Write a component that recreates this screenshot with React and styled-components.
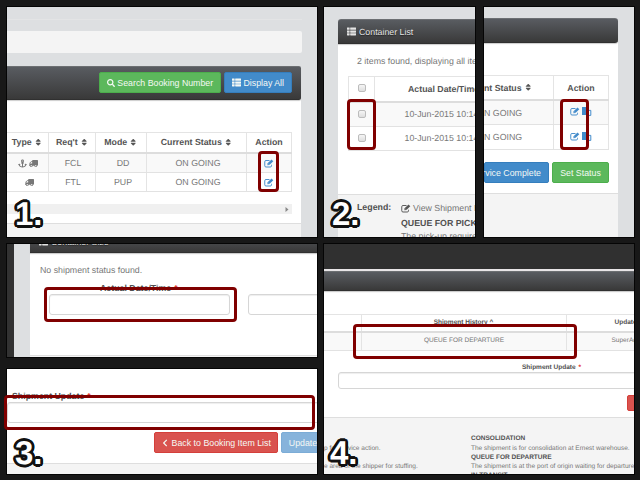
import React from "react";
import styled, { createGlobalStyle, css } from "styled-components";
import { FaSearch, FaThList, FaSort, FaAnchor, FaTruck, FaChevronLeft } from "react-icons/fa";

const Global = createGlobalStyle`
  * { box-sizing: border-box; }
  body { margin: 0; background: #181818; }
  svg { display: block; flex: none; }
`;

const Board = styled.main`
  width: 640px;
  height: 480px;
  padding: 7px;
  display: grid;
  grid-template-columns: 310px 310px;
  grid-template-rows: 230px 230px;
  gap: 7px;
  overflow: hidden;
  background: #181818;
  font: 8.8px/12px "Liberation Sans", Arial, sans-serif;
  text-rendering: geometricPrecision;
  color: #747474;
`;

const Step = styled.section`
  position: relative;
  min-width: 0;
  display: flex;
  flex-direction: ${(p) => (p.$row ? "row" : "column")};
  gap: ${(p) => p.$gap || 0}px;
`;

const Shot = styled.div`
  flex: none;
  width: ${(p) => p.$w || 310}px;
  height: ${(p) => p.$h || 230}px;
  padding: ${(p) => p.$pad || "0"};
  overflow: hidden;
  background: ${(p) => p.$bg || "#dddfe1"};
  box-shadow: 0 0 0 1px #050505;
  display: flex;
  flex-direction: column;
`;

const Breadcrumb = styled.div`
  flex: none;
  width: 294.5px;
  height: 34px;
  margin-bottom: 13px;
  padding-top: 11px;
  border-top: 1px solid #e3e4e5;
  &::after {
    content: "";
    display: block;
    height: 22px;
    background: #f4f4f4;
    border-radius: 0 2px 2px 0;
  }
`;

const Card = styled.div`
  flex: 1 0 auto;
  width: ${(p) => p.$w}px;
  display: flex;
  flex-direction: column;
  background: #fff;
  border-radius: 3px;
`;

const Header = styled.header`
  flex: none;
  height: ${(p) => p.$h}px;
  padding: 0 9px;
  display: flex;
  align-items: center;
  justify-content: ${(p) => p.$justify || "flex-start"};
  gap: 3px;
  color: #e4e4e4;
  background: ${(p) => (p.$flat ? "linear-gradient(#454648, #393939)" : "linear-gradient(#595c61, #393939)")};
  border-top: ${(p) => (p.$flat ? "0" : "1px solid #6c6f72")};
  border-bottom: 1px solid #303030;
  border-radius: ${(p) => p.$radius || "0"};
  box-shadow: 0 1px 1px #ccc;
`;

const Title = styled.div`
  display: flex;
  align-items: center;
  gap: 3px;
  margin-top: ${(p) => p.$lift || 0}px;
  text-shadow: 0 1px 1px #222;
`;

const tones = {
  green: css`background: #5cb85c; border-color: #4cae4c;`,
  blue: css`background: #428bca; border-color: #357ebd;`,
  red: css`background: #d9534f; border-color: #d43f3a;`,
  faded: css`background: #86b3db; border-color: #7cacd6;`,
};

const Button = styled.button`
  flex: none;
  width: ${(p) => p.$w}px;
  height: ${(p) => p.$h || 21}px;
  padding: 0 ${(p) => (p.$end ? "7px" : "0")} 0 0;
  border: 1px solid;
  border-radius: 2px;
  display: flex;
  align-items: center;
  justify-content: ${(p) => (p.$end ? "flex-end" : "center")};
  gap: 2.5px;
  white-space: nowrap;
  font: inherit;
  color: #f5f9f5;
  ${(p) => tones[p.$tone]}
`;

const ButtonRow = styled.div`
  flex: none;
  display: flex;
  gap: 3px;
  margin: ${(p) => p.$m || "0"};
`;

const Grid = styled.div`
  flex: none;
  width: ${(p) => p.$w || "auto"};
  margin: ${(p) => p.$m || "0"};
  border: solid #e4e4e4;
  border-width: 1px 0 0 ${(p) => (p.$left ? "1px" : "0")};
`;

const Row = styled.div`
  display: grid;
  grid-template-columns: ${(p) => p.$cols};
  height: ${(p) => p.$h}px;
  font-weight: ${(p) => (p.$head ? "bold" : "normal")};
  color: ${(p) => (p.$head ? "#555" : "#777")};
  background: ${(p) => (p.$odd ? "#f9f9f9" : "#fff")};
  border-bottom: ${(p) => (p.$head ? "2px solid #ddd" : "1px solid #e2e2e2")};
`;

const Cell = styled.div`
  min-width: 0;
  padding: ${(p) => p.$pad || "0"};
  display: flex;
  align-items: center;
  justify-content: ${(p) => (p.$start ? "flex-start" : "center")};
  gap: 2px;
  white-space: nowrap;
  border-right: ${(p) => (p.$open ? "0" : "1px solid #e4e4e4")};
`;

const Text = styled.div`
  flex: none;
  height: 12px;
  margin: ${(p) => p.$m || "0"};
  white-space: nowrap;
  font-weight: ${(p) => (p.$bold ? "bold" : "normal")};
  color: ${(p) => (p.$bold ? "#505050" : "#777")};
`;

const Star = styled.span`
  color: #e3302c;
  margin-left: 3px;
`;

const ScrollTrack = styled.div`
  flex: none;
  width: 285px;
  height: 10px;
  margin-top: 12px;
  padding-right: 3px;
  display: flex;
  align-items: center;
  justify-content: flex-end;
  background: #f0f0f0;
`;

const Footer = styled.footer`
  flex: 1;
  margin-top: ${(p) => p.$mt}px;
  padding: ${(p) => p.$pad || "0"};
  display: flex;
  background: #f4f4f4;
  border-top: 1px solid #dedede;
`;

const Stack = styled.div`
  flex: none;
  width: ${(p) => p.$w || "auto"};
  margin: ${(p) => p.$m || "0"};
`;

const Legend = styled.div`
  display: flex;
  align-items: center;
  gap: 2px;
  height: 12px;
  white-space: nowrap;
`;

const Field = styled.div`
  flex: none;
  width: ${(p) => p.$w}px;
  height: ${(p) => p.$h}px;
  margin: ${(p) => p.$m || "0"};
  background: #fff;
  border: 1px solid #d6d6d6;
  border-radius: 3px;
  box-shadow: inset 0 1px 1px #eee;
`;

const Fields = styled.div`
  display: flex;
  gap: 18px;
  margin-left: 19px;
`;

const Split = styled.div`
  flex: 1;
  display: flex;
`;

const Strip = styled.div`
  flex: none;
  width: ${(p) => p.$w || 310}px;
  height: ${(p) => (p.$h ? `${p.$h}px` : "auto")};
  background: ${(p) => p.$bg || "#323232"};
`;

const Check = styled.span`
  width: 8px;
  height: 8px;
  border: 1px solid #bcbcbc;
  border-radius: 2px;
  background: linear-gradient(#f5f5f5, #dedede);
`;

const Small = styled.div`
  font-size: 6.53px;
  line-height: 9.25px;
  white-space: nowrap;
  color: #777;
  b { color: #505050; }
`;

const Mark = styled.div`
  position: absolute;
  left: ${(p) => p.$x}px;
  top: ${(p) => p.$y}px;
  width: ${(p) => p.$w}px;
  height: ${(p) => p.$h}px;
  border: 3px solid #800000;
  border-radius: 4px;
`;

/* Sixteen offset shadows give the digits a round, even outline. */
const outline = Array.from({ length: 16 }, (_, i) => {
  const a = (i * Math.PI) / 8;
  return `${(Math.cos(a) * 2.7).toFixed(2)}px ${(Math.sin(a) * 2.7).toFixed(2)}px 0 #111`;
}).join(", ");

const StepNumber = styled.div`
  position: absolute;
  left: ${(p) => p.$x || 8}px;
  bottom: ${(p) => p.$b || 5}px;
  font: bold 33px/36px "Liberation Sans", Arial, sans-serif;
  color: #fff;
  text-shadow: ${outline};
`;

const Flip = styled.span`
  transform: scaleX(-1);
`;

const Edit = ({ color = "#428bca" }) => (
  <svg width="10" height="9" viewBox="0 0 20 18" fill="none" stroke={color}>
    <path d="M11 3H4a2.5 2.5 0 0 0-2.5 2.5v8A2.5 2.5 0 0 0 4 16h8.5a2.5 2.5 0 0 0 2.5-2.5V11.5" strokeWidth="1.9" />
    <path d="M6.8 12.6l.4-4L15 .8l3.6 3.6-7.8 7.8z" fill={color} stroke="none" />
    <path d="M8.3 9.2l1.9 1.9" stroke="#fff" strokeWidth="1.1" />
  </svg>
);

const Files = () => (
  <svg width="10" height="9" viewBox="0 0 10 9">
    <path d="M0 0h5v3L4 4v4H0z" fill="#428bca" />
    <path d="M4.9 5l1.7-1.6h2.2v5H4.9z" fill="#fff" stroke="#428bca" strokeWidth="1" />
  </svg>
);

const Sort = () => <FaSort size={8.5} />;

const Truck = () => (
  <Flip>
    <FaTruck size={9} />
  </Flip>
);

const Arrow = () => (
  <svg width="4" height="5" viewBox="0 0 4 5">
    <path d="M.5 0L3.5 2.5.5 5z" fill="#888" />
  </svg>
);

const bookingCols = "42px 47px 51px 100px 45px";

function BookingStep() {
  return (
    <Step>
      <Shot $pad="12px 0 0">
        <Breadcrumb />
        <Card $w={294}>
          <Header $h={34} $justify="flex-end" $radius="0 2px 2px 0">
            <ButtonRow $m="0 0 1px">
              <Button $tone="green" $w={122}><FaSearch size={8} />Search Booking Number</Button>
              <Button $tone="blue" $w={68}><FaThList size={9} />Display All</Button>
            </ButtonRow>
          </Header>
          <Grid $w="285px" $m="32px 0 0">
            <Row $head $h={21} $cols={bookingCols}>
              <Cell $pad="0 1px 1px 0">Type<Sort /></Cell>
              <Cell $pad="0 0 1px">Req't<Sort /></Cell>
              <Cell $pad="0 0 1px">Mode<Sort /></Cell>
              <Cell $pad="0 0 1px">Current Status<Sort /></Cell>
              <Cell $pad="0 0 1px">Action</Cell>
            </Row>
            <Row $odd $h={19} $cols={bookingCols}>
              <Cell><FaAnchor size={9} /><Truck /></Cell>
              <Cell $pad="0 0 1px 2px">FCL</Cell><Cell $pad="0 0 1px 4px">DD</Cell>
              <Cell $pad="0 0 1px 3px">ON GOING</Cell><Cell><Edit /></Cell>
            </Row>
            <Row $h={19} $cols={bookingCols}>
              <Cell $pad="0 0 0 3px"><Truck /></Cell>
              <Cell $pad="0 0 1px 2px">FTL</Cell><Cell $pad="0 0 1px 4px">PUP</Cell>
              <Cell $pad="0 0 1px 3px">ON GOING</Cell><Cell><Edit /></Cell>
            </Row>
          </Grid>
          <ScrollTrack><Arrow /></ScrollTrack>
          <Footer $mt={9} />
        </Card>
      </Shot>
      <Mark $x={251} $y={144} $w={21} $h={41} />
      <StepNumber>1.</StepNumber>
    </Step>
  );
}

function ContainerStep() {
  return (
    <Step $row $gap={9}>
      <Shot $w={151} $pad="12px 0 0 14px">
        <Card $w={137}>
          <Header $h={25} $radius="3px 0 0 0"><Title><FaThList size={9} />Container List</Title></Header>
          <Text $m="11px 0 9px 19px">2 items found, displaying all items.</Text>
          <Grid $left $m="0 0 0 10px">
            <Row $head $h={26} $cols="26px 1fr">
              <Cell $pad="0 0 2px"><Check /></Cell><Cell $start $open $pad="0 0 0 33px">Actual Date/Time</Cell>
            </Row>
            <Row $odd $h={24} $cols="26px 1fr">
              <Cell $pad="0 0 2px"><Check /></Cell><Cell $start $open $pad="0 0 1px 29.5px">10-Jun-2015 10:14</Cell>
            </Row>
            <Row $h={24} $cols="26px 1fr">
              <Cell $pad="0 0 2px"><Check /></Cell><Cell $start $open $pad="0 0 1px 29.5px">10-Jun-2015 10:14</Cell>
            </Row>
          </Grid>
          <Footer $mt={43} $pad="7px 0 0 19px">
            <Stack $w="44px"><Text $bold $m="-1px 0 0">Legend:</Text></Stack>
            <Stack>
              <Legend><Edit color="#555" />View Shipment History</Legend>
              <Text $bold $m="3px 0 1px">QUEUE FOR PICKUP</Text>
              <Text>The pick-up requires</Text>
            </Stack>
          </Footer>
        </Card>
      </Shot>
      <Shot $w={150} $pad="11px 0 0">
        <Card $w={134}>
          <Header $h={25} $radius="0 3px 3px 0" />
          <Grid $w="125px" $m="32px 0 0">
            <Row $head $h={25} $cols="70px 55px">
              <Cell $start>nt Status<Sort /></Cell><Cell>Action</Cell>
            </Row>
            <Row $odd $h={24} $cols="70px 55px">
              <Cell $start>N GOING</Cell><Cell $pad="0 0 2px"><Edit /><Files /></Cell>
            </Row>
            <Row $h={25} $cols="70px 55px">
              <Cell $start $pad="0 0 1px">N GOING</Cell><Cell $pad="0 0 2px"><Edit /><Files /></Cell>
            </Row>
          </Grid>
          <ButtonRow $m="12px 0 0">
            <Button $tone="blue" $w={65} $end>Service Complete</Button>
            <Button $tone="green" $w={57}>Set Status</Button>
          </ButtonRow>
          <Footer $mt={10} />
        </Card>
      </Shot>
      <Mark $x={23} $y={92} $w={29} $h={51} />
      <Mark $x={236} $y={92} $w={29} $h={51} />
      <StepNumber>2.</StepNumber>
    </Step>
  );
}

function UpdateStep() {
  return (
    <Step $gap={12}>
      <Shot $h={113}>
        <Split>
          <Strip $w={7} />
          <Strip $w={16} $bg="#dddfe1" />
          <Card $w={287}>
            <Header $h={9} $flat><Title $lift={-13}><FaThList size={9} />Container Size</Title></Header>
            <Text $m="11px 0 6px 10px">No shipment status found.</Text>
            <Text $bold $m="0 0 0 70px">Actual Date/Time<Star>*</Star></Text>
            <Fields>
              <Field $w={181} $h={21} />
              <Field $w={100} $h={21} />
            </Fields>
            <Footer $mt={40} />
          </Card>
        </Split>
      </Shot>
      <Shot $h={105} $bg="#fff">
        <Text $bold $m="21px 0 0 5px">Shipment Update<Star>*</Star></Text>
        <Field $w={320} $h={21} />
        <ButtonRow $m="9px 0 0 147px">
          <Button $tone="red" $w={124}><FaChevronLeft size={8} />Back to Booking Item List</Button>
          <Button $tone="faded" $w={44}>Update</Button>
        </ButtonRow>
        <Footer $mt={10} />
      </Shot>
      <Mark $x={37} $y={43} $w={193} $h={35} />
      <Mark $x={-3} $y={151} $w={311} $h={35} />
      <StepNumber $b={3}>3.</StepNumber>
    </Step>
  );
}

const historyCols = "37.5px 205px 1fr";

function HistoryStep() {
  return (
    <Step>
      <Shot $bg="#fff">
        <Strip $h={25} $bg="#303030" />
        <Strip $h={2} $bg="#e8e5e7" />
        <Header $h={20} />
        <Grid $m="23px 0 0">
          <Row $head $h={18} $cols={historyCols}>
            <Cell />
            <Cell><Small><b>Shipment History ^</b></Small></Cell>
            <Cell $start $open $pad="0 0 0 48px"><Small><b>Updated By</b></Small></Cell>
          </Row>
          <Row $odd $h={18} $cols={historyCols}>
            <Cell />
            <Cell $pad="0 0 1px 1px"><Small>QUEUE FOR DEPARTURE</Small></Cell>
            <Cell $start $open $pad="0 0 1px 45px"><Small>SuperAdmin</Small></Cell>
          </Row>
        </Grid>
        <Stack $m="12px 0 0 198px">
          <Small><b>Shipment Update<Star>*</Star></b></Small>
        </Stack>
        <Field $w={320} $h={17} $m="0 0 0 14px" />
        <ButtonRow $m="6px 0 0 303px"><Button $tone="red" $w={60} $h={16} /></ButtonRow>
        <Footer $mt={6} $pad="16px 0 0">
          <Stack $w="147px">
            <Small>&nbsp;</Small>
            <Small>p for service action.</Small>
            <Small>&nbsp;</Small>
            <Small>e area of the shipper for stuffing.</Small>
          </Stack>
          <Stack>
            <Small><b>CONSOLIDATION</b></Small>
            <Small>The shipment is for consolidation at Ernest warehouse.</Small>
            <Small><b>QUEUE FOR DEPARTURE</b></Small>
            <Small>The shipment is at the port of origin waiting for departure.</Small>
            <Small><b>IN TRANSIT</b></Small>
          </Stack>
        </Footer>
      </Shot>
      <Mark $x={29} $y={80} $w={224} $h={35} />
      <StepNumber $b={3} $x={6}>4.</StepNumber>
    </Step>
  );
}

export default function App() {
  return (
    <>
      <Global />
      <Board>
        <BookingStep />
        <ContainerStep />
        <UpdateStep />
        <HistoryStep />
      </Board>
    </>
  );
}
